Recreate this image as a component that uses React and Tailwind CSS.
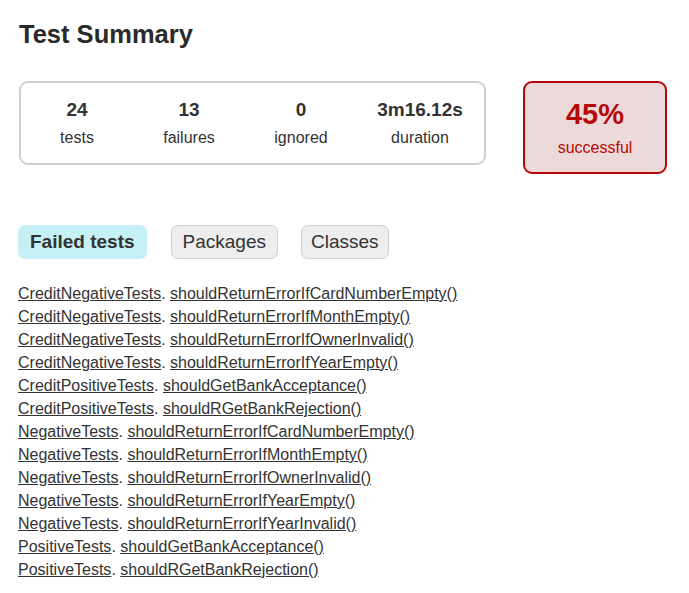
const failed = [
  ["CreditNegativeTests", "shouldReturnErrorIfCardNumberEmpty()"],
  ["CreditNegativeTests", "shouldReturnErrorIfMonthEmpty()"],
  ["CreditNegativeTests", "shouldReturnErrorIfOwnerInvalid()"],
  ["CreditNegativeTests", "shouldReturnErrorIfYearEmpty()"],
  ["CreditPositiveTests", "shouldGetBankAcceptance()"],
  ["CreditPositiveTests", "shouldRGetBankRejection()"],
  ["NegativeTests", "shouldReturnErrorIfCardNumberEmpty()"],
  ["NegativeTests", "shouldReturnErrorIfMonthEmpty()"],
  ["NegativeTests", "shouldReturnErrorIfOwnerInvalid()"],
  ["NegativeTests", "shouldReturnErrorIfYearEmpty()"],
  ["NegativeTests", "shouldReturnErrorIfYearInvalid()"],
  ["PositiveTests", "shouldGetBankAcceptance()"],
  ["PositiveTests", "shouldRGetBankRejection()"],
];

const counters = [
  { value: "24", label: "tests", width: "w-[112px]" },
  { value: "13", label: "failures", width: "w-[112px]" },
  { value: "0", label: "ignored", width: "w-[112px]" },
  { value: "3m16.12s", label: "duration", width: "w-[126px]" },
];

export default function App() {
  return (
    <div
      className="min-h-screen bg-white px-[18px] pt-[20px] text-[#333]"
      style={{ fontFamily: '"Liberation Sans", Arial, sans-serif' }}
    >
      <h1 className="text-[25.5px] leading-[29px] font-bold text-[#2a2a2a] pl-px">
        Test Summary
      </h1>

      <div className="mt-[32px] flex items-start">
        <div className="ml-px flex h-[84px] w-[467px] rounded-[9px] border-2 border-[#d0d0d0] pt-[16px]">
          {counters.map((c) => (
            <div key={c.label} className={`${c.width} text-center`}>
              <div className="text-[19px] leading-[22px] font-bold">{c.value}</div>
              <div className="mt-[8px] text-[16px] leading-[18px]">{c.label}</div>
            </div>
          ))}
        </div>

        <div className="ml-[37px] flex h-[93px] w-[144px] flex-col items-center rounded-[9px] border-2 border-[#b60808] bg-[#ecdada] pt-[15px] text-[#b60808]">
          <div className="text-[29px] leading-[33px] font-bold">45%</div>
          <div className="mt-[8px] text-[16px] leading-[18px]">successful</div>
        </div>
      </div>

      <div className="mt-[51px] flex">
        <div className="flex h-[34px] items-center rounded-[7px] bg-[#c5f0f5] px-[12px] text-[19px] font-bold">
          Failed tests
        </div>
        <div className="ml-[24px] flex h-[34px] items-center rounded-[7px] border border-[#d0d0d0] bg-[#eeeeee] px-[11px] text-[19px]">
          Packages
        </div>
        <div className="ml-[23px] flex h-[34px] items-center rounded-[7px] border border-[#d0d0d0] bg-[#eeeeee] px-[9px] text-[19px]">
          Classes
        </div>
      </div>

      <ul className="mt-[23px] text-[16px] leading-[23px]">
        {failed.map(([cls, method], i) => (
          <li key={i}>
            <a href="#" className="underline">{cls}</a>
            {". "}
            <a href="#" className="underline">{method}</a>
          </li>
        ))}
      </ul>
    </div>
  );
}
